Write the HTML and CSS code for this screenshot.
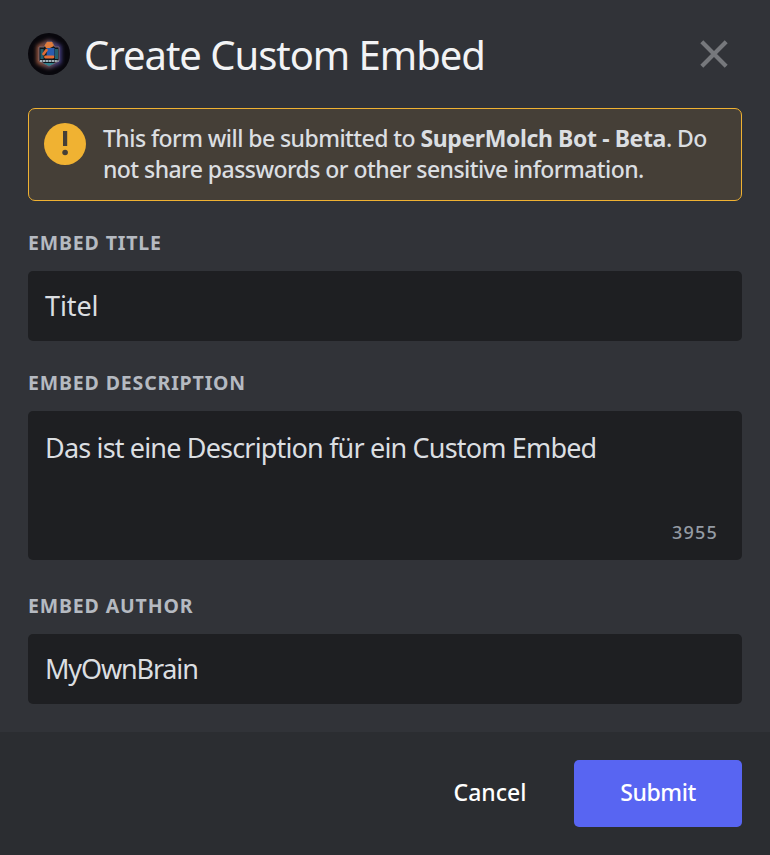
FILE: index.html
```
<!DOCTYPE html>
<html lang="en">
<head>
<meta charset="utf-8">
<title>Create Custom Embed</title>
<link rel="stylesheet" href="styles.css">
</head>
<body>
<form class="modal">
  <header class="header">
    <svg class="avatar" viewBox="0 0 42 42" aria-hidden="true">
      <defs>
        <filter id="glow" x="-40%" y="-40%" width="180%" height="180%"><feGaussianBlur stdDeviation="2.2"/></filter>
        <filter id="soft"><feGaussianBlur stdDeviation=".45"/></filter>
        <linearGradient id="rim"><stop offset="0" stop-color="#bd6c4c"/><stop offset=".5" stop-color="#806070"/><stop offset="1" stop-color="#514ba0"/></linearGradient>
      </defs>
      <circle cx="21" cy="21" r="21" fill="#08070c"/>
      <path d="M11 14 L21 9 L31 14 V29 L21 33 L11 29Z" fill="none" stroke="url(#rim)" stroke-width="4" filter="url(#glow)"/>
      <g filter="url(#soft)">
        <path d="M11 14 H16 L19 9 H24 L27 14 H31 V28 L21 33 L11 28Z" fill="#11171f" stroke="#8a7278" stroke-width=".8"/>
        <path d="M12.5 16 h3 v10 h-3z M27 16 h3 v10 h-3z" fill="#245f6c"/>
        <path d="M19 15 h7.5 v8 h-8z" fill="#2a5cae"/>
        <path d="M16.5 12.5 L19 9 H24 L26 13 L22 15 H18z" fill="#e07c3e"/>
        <path d="M18.5 17 L15.5 21 M17.5 24 H25" fill="none" stroke="#e06c35" stroke-width="2.8" stroke-linecap="round"/>
        <path d="M12 28 H30.5" stroke="#a3b0b8" stroke-width="2.2" stroke-dasharray="2.4 .5"/>
        <path d="M15 30 H27 L21 33Z" fill="#30808c"/>
      </g>
    </svg>
    <h1 class="title">Create Custom Embed</h1>
    <svg class="close" viewBox="0 0 28 28" aria-label="Close"><path d="M1.8 1.8 L26.2 26.2 M26.2 1.8 L1.8 26.2"/></svg>
  </header>
  <div class="notice">
    <svg class="notice-icon" viewBox="0 0 42 42" aria-hidden="true"><circle cx="21" cy="21" r="21" fill="#f0b232"/><path d="M19 8h4.2v15H19z" fill="#453f37"/><circle cx="21.1" cy="29.5" r="2.8" fill="#453f37"/></svg>
    <p class="notice-text"><span>This form will be submitted to </span><b>SuperMolch Bot - Beta</b>. Do<br>not share passwords or other sensitive information.</p>
  </div>
  <section class="field">
    <h2 class="label">EMBED TITLE</h2>
    <div class="input">Titel</div>
  </section>
  <section class="field">
    <h2 class="label">EMBED DESCRIPTION</h2>
    <div class="input area"><span class="description">Das ist eine Description für ein Custom Embed</span><span class="count">3955</span></div>
  </section>
  <section class="field">
    <h2 class="label">EMBED AUTHOR</h2>
    <div class="input author">MyOwnBrain</div>
  </section>
  <footer class="footer">
    <button class="button cancel" type="button">Cancel</button>
    <button class="button submit" type="button">Submit</button>
  </footer>
</form>
</body>
</html>
```

FILE: styles.css
```
* { box-sizing: border-box; }
body { margin: 0; background: #313338; font-family: "Noto Sans", sans-serif; }
h1, h2, p { margin: 0; }
.modal { display: flex; flex-direction: column; height: 855px; }
.modal > * { flex-shrink: 0; }
.header { display: flex; align-items: center; height: 108px; padding: 0 42px 0 28px; }
.avatar { width: 42px; height: 42px; }
.title { flex: 1; margin-left: 14px; padding-top: 2px; font-size: 40px; font-weight: 400; line-height: 54px; letter-spacing: -1.03px; color: #f2f3f5; white-space: nowrap; }
.close { width: 28px; height: 28px; fill: none; stroke: #76787c; stroke-width: 4.2; }
.notice { display: flex; height: 93px; margin: 0 28px 28px; padding: 14px 15px; border: 1px solid #f0b232; border-radius: 7px; background: #453f37; }
.notice-icon { flex: none; width: 42px; height: 42px; }
.notice-text { margin-left: 17px; font-size: 23px; font-weight: 500; line-height: 31px; letter-spacing: -.56px; color: #dbdee1; white-space: nowrap; }
.notice-text b { font-weight: 700; letter-spacing: -.39px; }
.field { margin: 0 28px 28px; }
.label { height: 28px; margin-bottom: 14px; font-size: 19.5px; font-weight: 700; line-height: 28px; letter-spacing: .85px; color: #b5bac1; }
.input { height: 70px; padding: 0 17px; border-radius: 5px; background: #1e1f22; color: #dbdee1; font-size: 27px; line-height: 70px; letter-spacing: -.1px; }
.area { display: flex; flex-direction: column; justify-content: space-between; height: 149px; margin-bottom: 32px; padding: 18px 24px 16px 17px; line-height: 38px; }
.field:has(.area) { margin-bottom: 0; }
.description { letter-spacing: -.83px; }
.count { align-self: flex-end; font-size: 18px; font-weight: 500; line-height: 24px; letter-spacing: 1.2px; color: #949ba4; }
.author { letter-spacing: -1.15px; }
.footer { display: flex; align-items: center; justify-content: flex-end; height: 123px; margin-top: auto; padding: 0 28px; background: #2b2d31; }
.button { height: 67px; padding: 0 0 2px; border: 0; border-radius: 5px; color: #fff; font: 500 23px/65px "Noto Sans", sans-serif; }
.cancel { width: 168px; background: none; }
.submit { width: 168px; background: #5865f2; letter-spacing: -.4px; }
```
